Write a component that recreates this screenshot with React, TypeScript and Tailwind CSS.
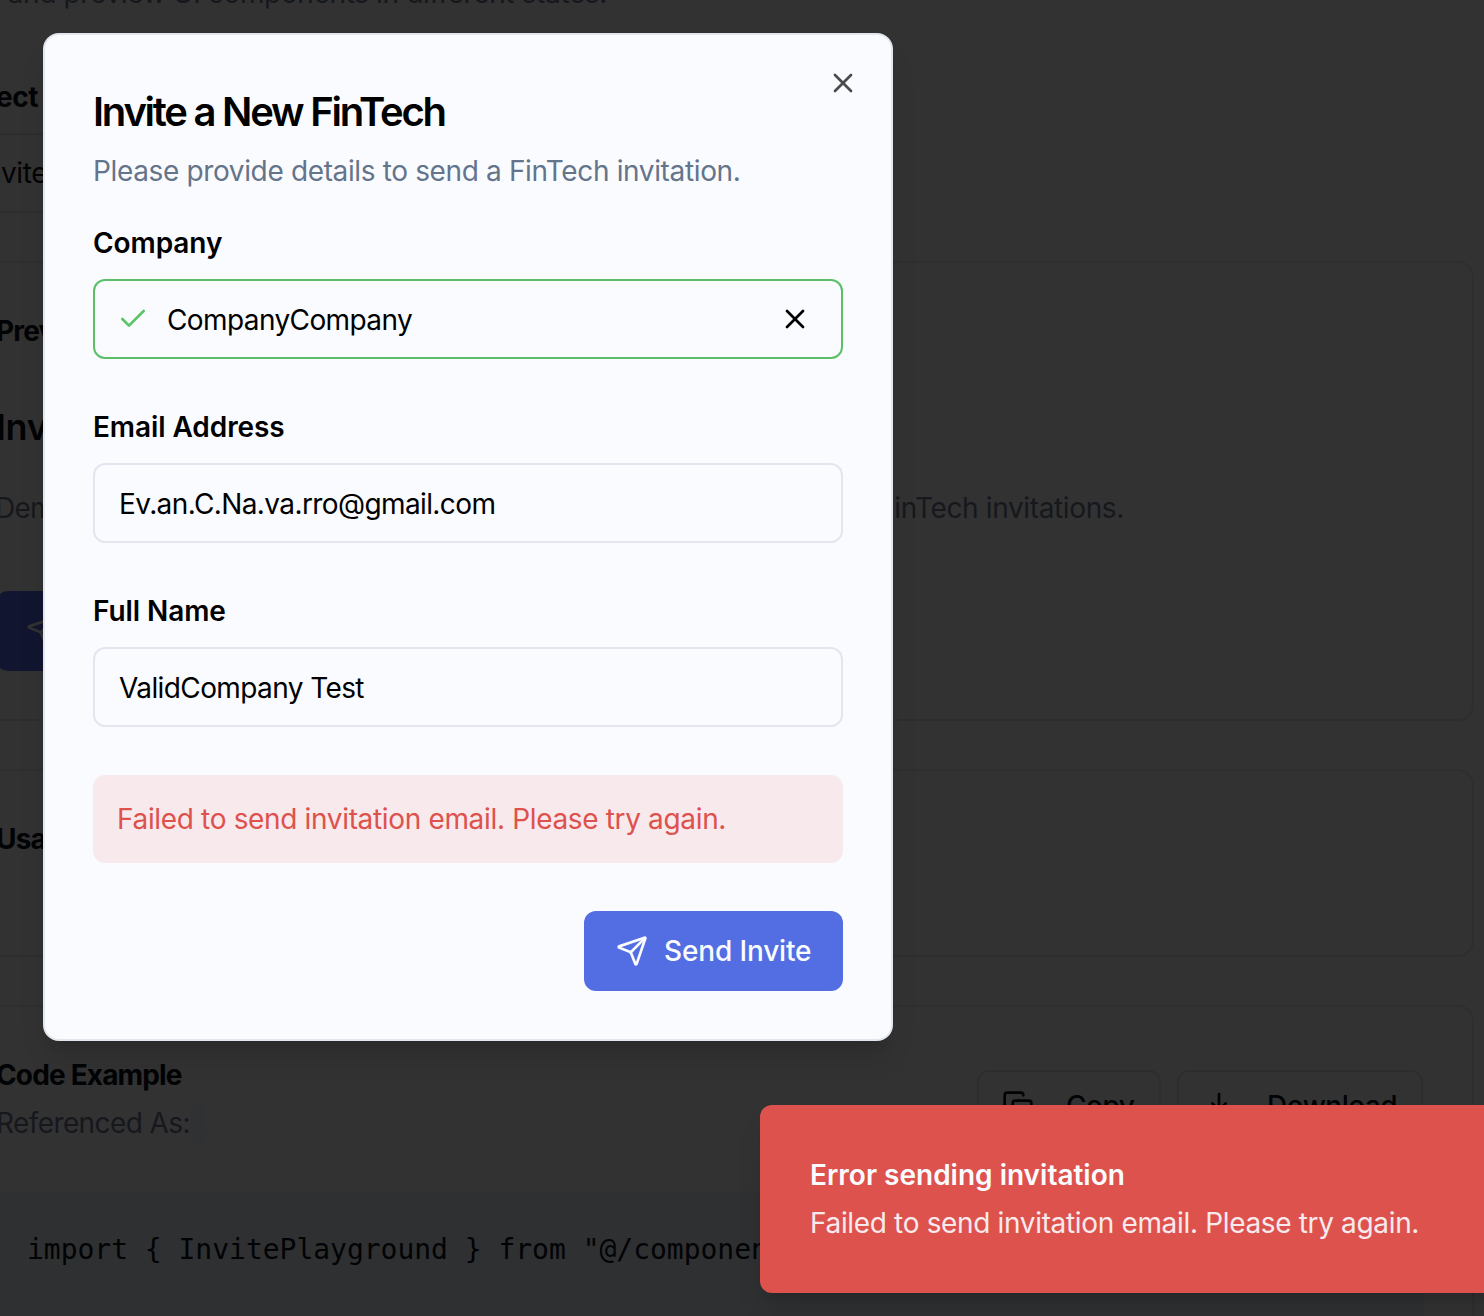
import React from "react";
import { Check, Copy, Download, Send, X } from "lucide-react";

function Field({
  label,
  value,
  valid = false,
}: {
  label: string;
  value: string;
  valid?: boolean;
}) {
  return (
    <div className="flex flex-col gap-4">
      <label className="text-[28px] leading-10 font-semibold tracking-[-0.08px] text-black">{label}</label>
      <div
        className={
          valid
            ? "flex h-20 items-center rounded-xl border-2 border-[#5bbf69] pl-[22px] pr-[30px]"
            : "flex h-20 items-center rounded-xl border-2 border-[#e3e6ee] px-6"
        }
      >
        {valid && <Check className="mr-[18px] size-8 shrink-0 text-[#5bc466]" strokeWidth={2} />}
        <span className="grow pt-[2px] text-[28px] leading-10 tracking-[-0.6px] text-black">{value}</span>
        {valid && <X className="size-8 shrink-0 text-black" strokeWidth={2} />}
      </div>
    </div>
  );
}

function Playground() {
  return (
    <div className="-ml-[54px] flex w-[1528px] flex-col text-[28px] leading-10 tracking-[-0.36px] text-[#020305]">
      <div className="-mt-[27px] flex h-10 w-[661px] justify-end whitespace-nowrap text-[#16181d]">
        and preview UI components in different states.
      </div>
      <div className="mt-[64px] w-[92px] text-right font-bold tracking-[-0.5px]">Select</div>
      <div className="mt-[16px] flex h-20 w-[400px] items-center rounded-xl border-2 border-[#2d2d2e] pl-[30px]">
        Invite
      </div>

      <section className="mt-[48px] h-[460px] rounded-2xl border-2 border-[#2e2e2f] px-12 pt-12">
        <h2 className="font-bold tracking-[-0.03em]">Preview</h2>
        <h3 className="mt-[52px] text-[36px] leading-[48px] font-semibold">Invite</h3>
        <div className="mt-[37px] flex w-[1128px] justify-between whitespace-nowrap text-[#16181d]">
          <span className="-ml-px tracking-[-0.8px]">Demo</span>
          <span>FinTech invitations.</span>
        </div>
        <div className="mt-[63px] flex h-20 w-[259px] items-center rounded-xl bg-[#11152f] px-[30px] text-[#323232]">
          <Send className="size-8 shrink-0" />
        </div>
      </section>

      <section className="mt-[48px] h-[188px] rounded-2xl border-2 border-[#2e2e2f] px-12 pt-12">
        <h2 className="font-bold tracking-[-0.03em]">Usage</h2>
      </section>

      <section className="mt-[48px] h-[460px] rounded-2xl border-2 border-[#2e2e2f] px-12 pt-12">
        <div className="flex justify-between">
          <div>
            <h2 className="font-bold tracking-[-0.03em]">Code Example</h2>
            <p className="mt-2 flex items-center tracking-[-0.6px] text-[#16181d]">
              Referenced As:
              <span className="h-10 w-4 rounded-lg bg-[#303133]" />
            </p>
          </div>
          <div className="mt-[15px] mr-px flex gap-4 font-medium tracking-[-0.5px]">
            <div className="flex h-[72px] w-[184px] items-center gap-8 rounded-xl border-2 border-[#2d2d2f] pl-[23px]">
              <Copy className="size-8 shrink-0" />
              Copy
            </div>
            <div className="flex h-[72px] w-[246px] items-center gap-8 rounded-xl border-2 border-[#2d2d2f] pl-6">
              <Download className="size-8 shrink-0" />
              Download
            </div>
          </div>
        </div>
        <pre className="mt-[48px] h-40 overflow-hidden rounded-xl bg-[#2f3032] px-[31px] pt-[39px] font-['DejaVu_Sans_Mono',monospace] text-[28px] leading-10 tracking-[-0.02px]">
          {'import { InvitePlayground } from "@/components/invite"'}
        </pre>
      </section>
    </div>
  );
}

function InviteDialog() {
  return (
    <div className="absolute top-[33px] left-[43px] flex h-[1008px] w-[850px] flex-col rounded-2xl border-2 border-[#e2e6ee] bg-[#fafbff] p-12 shadow-[0_20px_30px_-6px_rgba(0,0,0,0.12),0_8px_12px_-8px_rgba(0,0,0,0.12)]">
      <X className="absolute top-8 right-8 size-8 text-[#4b4b4d]" />
      <h1 className="pt-px text-[40px] leading-[55px] font-semibold tracking-[-2.25px] text-black">
        Invite a New FinTech
      </h1>
      <p className="mt-3 text-[28px] leading-10 tracking-[-0.36px] text-[#64748b]">
        Please provide details to send a FinTech invitation.
      </p>
      <div className="mt-8 flex flex-col gap-12">
        <Field label="Company" value="CompanyCompany" valid />
        <Field label="Email Address" value="Ev.an.C.Na.va.rro@gmail.com" />
        <Field label="Full Name" value="ValidCompany Test" />
      </div>
      <div className="mt-12 flex h-22 items-center rounded-xl bg-[#f8e9ed] px-6 text-[28px] leading-10 tracking-[-0.34px] text-[#dd524c]">
        Failed to send invitation email. Please try again.
      </div>
      <button className="mt-12 flex h-20 w-[259px] items-center gap-4 self-end rounded-xl bg-[#536ee3] px-8 text-[28px] leading-10 font-medium tracking-[-0.15px] whitespace-nowrap text-[#fafbff]">
        <Send className="size-8 shrink-0" />
        Send Invite
      </button>
    </div>
  );
}

function Toast() {
  return (
    <div className="absolute top-[1105px] left-[760px] flex h-[188px] w-[792px] flex-col gap-2 rounded-xl bg-[#dd524c] p-[50px] text-[28px] leading-10 whitespace-nowrap text-[#fafbff] shadow-[0_20px_30px_-6px_rgba(0,0,0,0.12),0_8px_12px_-8px_rgba(0,0,0,0.12)]">
      <div className="font-semibold">Error sending invitation</div>
      <div className="tracking-[-0.34px] text-[#f7eaed]">Failed to send invitation email. Please try again.</div>
    </div>
  );
}

export default function App() {
  return (
    <main className="relative flex h-[1316px] w-[1484px] flex-col overflow-hidden bg-[#323232] font-['Inter',sans-serif]">
      <Playground />
      <InviteDialog />
      <Toast />
    </main>
  );
}
